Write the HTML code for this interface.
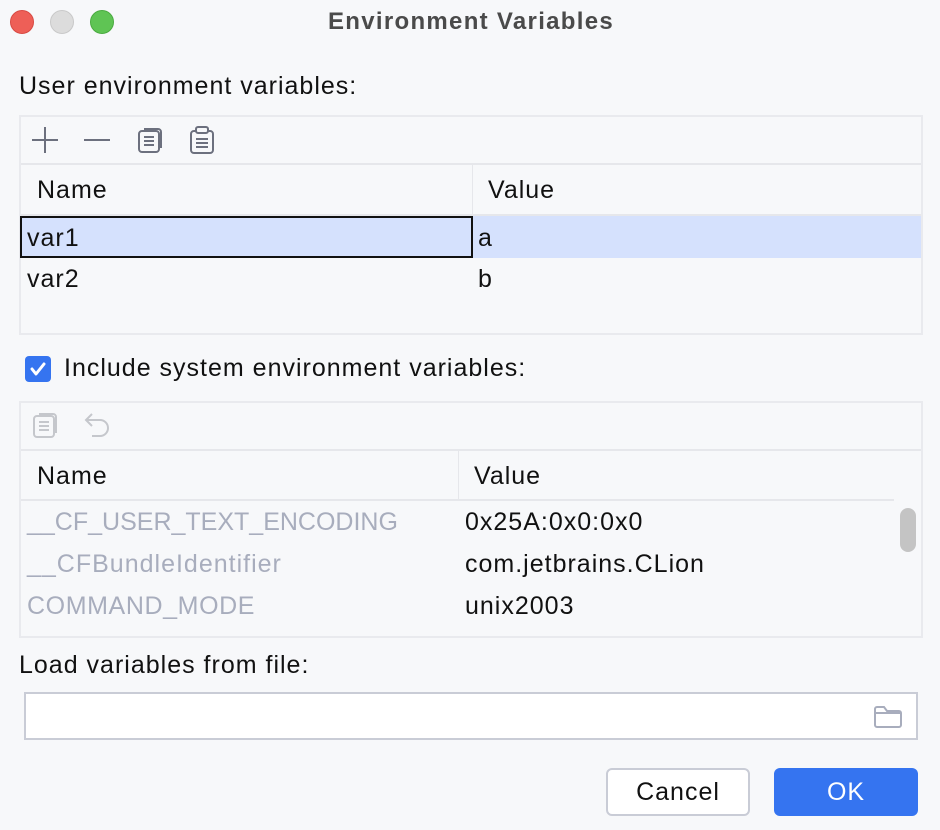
<!DOCTYPE html>
<html><head><style>
*{margin:0;padding:0;box-sizing:border-box}
body{width:940px;height:830px;background:#f7f8fa;font-family:"Liberation Sans",sans-serif;color:#111;position:relative;overflow:hidden;font-size:25px;letter-spacing:1px}
.a{position:absolute;white-space:nowrap}
.dot{position:absolute;width:24px;height:24px;border-radius:50%;top:10px}
.panel{position:absolute;left:19px;width:904px;border:2px solid #e9eaee;background:#f7f8fa}
.line{position:absolute;background:#e6e7eb}
.t{position:absolute;line-height:1;white-space:nowrap}
</style></head><body>
<div class="dot" style="left:10px;background:#ee5f57;border:1px solid #d84a43"></div>
<div class="dot" style="left:50px;background:#dcdcdc;border:1px solid #c9c9c9"></div>
<div class="dot" style="left:90px;background:#5fc454;border:1px solid #4aab40"></div>
<div class="t" style="left:0;width:942px;text-align:center;top:10px;font-weight:bold;color:#4a4a4a;font-size:24px;letter-spacing:1.3px">Environment Variables</div>

<div class="t" style="left:19px;top:74px">User environment variables:</div>
<div class="panel" style="top:115px;height:220px"></div>
<svg class="a" style="left:30px;top:126px" width="200" height="30" fill="none" stroke="#6c707e" stroke-width="2">
<path d="M2 14h26M15 1v26"/><path d="M54 14h26"/>
<rect x="109" y="5" width="20" height="21" rx="3"/><path d="M114 3h14a3 3 0 0 1 3 3v16"/><path d="M114 11h10M114 15h10M114 19h10"/>
<rect x="161" y="5" width="22" height="22" rx="3"/><rect x="166" y="1" width="12" height="6" rx="2" fill="#f7f8fa"/><path d="M166 13h12M166 17h12M166 21h12"/>
</svg>
<div class="line" style="left:21px;top:163px;width:900px;height:2px"></div>
<div class="t" style="left:37px;top:178px">Name</div>
<div class="line" style="left:472px;top:165px;width:1px;height:50px"></div>
<div class="t" style="left:488px;top:178px">Value</div>
<div class="line" style="left:21px;top:214px;width:900px;height:2px"></div>
<div class="a" style="left:21px;top:216px;width:900px;height:42px;background:#d5e1fd"></div>
<div class="a" style="left:20px;top:216px;width:453px;height:42px;border:2px solid #111"></div>
<div class="t" style="left:27px;top:226px">var1</div>
<div class="t" style="left:478px;top:226px">a</div>
<div class="t" style="left:27px;top:267px">var2</div>
<div class="t" style="left:478px;top:267px">b</div>

<div class="a" style="left:25px;top:356px;width:26px;height:26px;border-radius:4px;background:#3574f0"></div>
<svg class="a" style="left:25px;top:356px" width="26" height="26"><path d="M7 13l4 5 8-10" fill="none" stroke="#fff" stroke-width="3" stroke-linecap="round" stroke-linejoin="round"/></svg>
<div class="t" style="left:64px;top:356px">Include system environment variables:</div>

<div class="panel" style="top:401px;height:237px"></div>
<svg class="a" style="left:30px;top:410px" width="90" height="30" fill="none" stroke="#c5c7cc" stroke-width="2">
<rect x="4" y="6" width="20" height="21" rx="3"/><path d="M9 4h14a3 3 0 0 1 3 3v16"/><path d="M9 12h10M9 16h10M9 20h10"/>
<path d="M62 4l-6 6 6 6"/><path d="M56 10h14a8 8 0 0 1 0 16h-8"/>
</svg>
<div class="line" style="left:21px;top:449px;width:900px;height:2px"></div>
<div class="t" style="left:37px;top:464px">Name</div>
<div class="line" style="left:458px;top:451px;width:1px;height:49px"></div>
<div class="t" style="left:474px;top:464px">Value</div>
<div class="line" style="left:21px;top:499px;width:873px;height:2px"></div>
<div class="t" style="left:27px;top:510px;color:#a8adbd;letter-spacing:0">__CF_USER_TEXT_ENCODING</div>
<div class="t" style="left:465px;top:510px">0x25A:0x0:0x0</div>
<div class="t" style="left:27px;top:552px;color:#a8adbd">__CFBundleIdentifier</div>
<div class="t" style="left:465px;top:552px">com.jetbrains.CLion</div>
<div class="t" style="left:27px;top:594px;color:#a8adbd;letter-spacing:0.6px">COMMAND_MODE</div>
<div class="t" style="left:465px;top:594px">unix2003</div>
<div class="a" style="left:900px;top:508px;width:16px;height:44px;border-radius:8px;background:#c4c4c4"></div>

<div class="t" style="left:19px;top:653px">Load variables from file:</div>
<div class="a" style="left:24px;top:692px;width:894px;height:48px;background:#fff;border:2px solid #c9ccd6"></div>
<svg class="a" style="left:873px;top:704px" width="32" height="26" fill="none" stroke="#a8adbd" stroke-width="2"><path d="M2 5a2 2 0 0 1 2-2h7l3 4h12a2 2 0 0 1 2 2v12a2 2 0 0 1-2 2H4a2 2 0 0 1-2-2z"/><path d="M2 9h26"/></svg>

<div class="a" style="left:606px;top:768px;width:144px;height:48px;background:#fff;border:2px solid #c9ccd6;border-radius:6px"></div>
<div class="t" style="left:606px;top:780px;width:144px;text-align:center">Cancel</div>
<div class="a" style="left:774px;top:768px;width:144px;height:48px;background:#3574f0;border-radius:6px"></div>
<div class="t" style="left:774px;top:780px;width:144px;text-align:center;color:#fff">OK</div>
</body></html>
